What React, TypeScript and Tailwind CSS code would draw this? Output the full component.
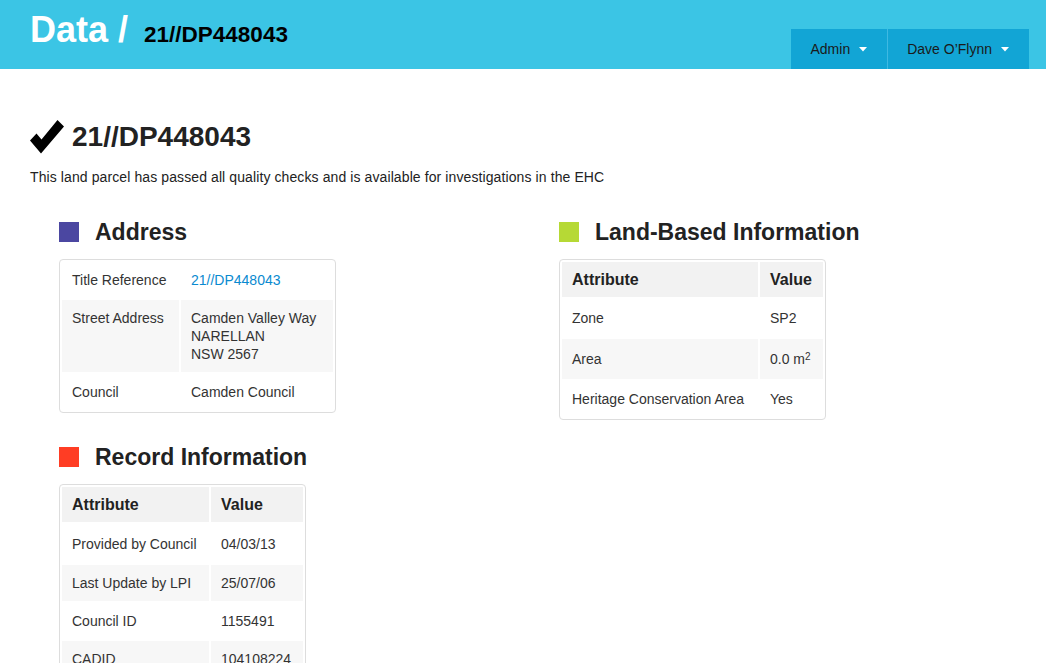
import React from "react";

const font = { fontFamily: '"Liberation Sans", Arial, Helvetica, sans-serif' };

function Caret() {
  return (
    <svg width="8" height="5" viewBox="0 0 8 5" className="ml-[9px] mt-[1px]">
      <polygon points="0,0 8,0 4,4.5" fill="#ffffff" />
    </svg>
  );
}

function Check() {
  return (
    <svg width="34" height="36" viewBox="0 0 34 36" className="shrink-0">
      <polygon
        points="0,21.5 6.5,14.5 11.5,20.5 27.5,1 34,7.5 11,34.5"
        fill="#000000"
      />
    </svg>
  );
}

function SectionHeading({ color, title }: { color: string; title: string }) {
  return (
    <div className="flex items-center h-[30px] mb-[12px]">
      <div className={`w-[20px] h-[20px] ${color}`} />
      <h2 className="ml-[16px] text-[23px] font-bold text-[#222222] leading-[30px]">
        {title}
      </h2>
    </div>
  );
}

type Row = { k: string; v: React.ReactNode; cls?: string };

function DataTable({
  header,
  rows,
  w1,
  w2,
}: {
  header?: boolean;
  rows: Row[];
  w1: string;
  w2: string;
}) {
  return (
    <table className="border-separate border-spacing-[2px] border border-[#dddddd] rounded-[4px] text-[14px] leading-[18px] text-[#333333] table-fixed">
      <colgroup>
        <col className={w1} />
        <col className={w2} />
      </colgroup>
      {header && (
        <thead>
          <tr>
            <th className="bg-[#f2f2f2] text-left px-[10px] h-[35px] text-[16px] font-bold text-[#222222]">
              Attribute
            </th>
            <th className="bg-[#f2f2f2] text-left px-[10px] h-[35px] text-[16px] font-bold text-[#222222]">
              Value
            </th>
          </tr>
        </thead>
      )}
      <tbody>
        {rows.map((r, i) => {
          const bg = i % 2 === 1 ? "bg-[#f7f7f7]" : "";
          const py = r.cls ?? "py-[9px]";
          return (
            <tr key={i}>
              <td className={`${bg} ${py} px-[10px] align-top whitespace-nowrap`}>{r.k}</td>
              <td className={`${bg} ${py} px-[10px] align-top whitespace-nowrap`}>{r.v}</td>
            </tr>
          );
        })}
      </tbody>
    </table>
  );
}

export default function App() {
  return (
    <div style={font} className="min-h-[663px] bg-white text-[#333333]">
      <header className="h-[69px] bg-[#3bc5e5] flex items-start justify-between">
        <div className="flex items-baseline pl-[30px] pt-[8px]">
          <span className="text-[36px] font-bold text-white leading-[44px]">Data /</span>
          <span className="ml-[16px] text-[22.5px] font-bold text-black">21//DP448043</span>
        </div>
        <nav className="flex mt-[29px] mr-[17px] h-[40px]">
          <button className="h-[40px] bg-[#12a5d5] pl-[20px] pr-[20px] flex items-center text-[14px] text-[#1a1a1a]">
            Admin
            <Caret />
          </button>
          <div className="w-[1px] bg-[#3fb9e2]" />
          <button className="h-[40px] bg-[#12a5d5] pl-[19px] pr-[20px] flex items-center text-[14px] text-[#1a1a1a]">
            Dave O’Flynn
            <Caret />
          </button>
        </nav>
      </header>

      <main className="px-[30px] pt-[50px]">
        <div className="flex items-center">
          <Check />
          <h1 className="ml-[8px] text-[28px] font-bold text-[#222222] leading-[36px]">21//DP448043</h1>
        </div>
        <p className="mt-[13px] text-[14px] tracking-[0.1px] leading-[18px] text-[#222222]">
          This land parcel has passed all quality checks and is available for investigations in the EHC
        </p>

        <div className="grid grid-cols-[500px_1fr] mt-[31px] pl-[29px]">
          <div className="flex flex-col">
            <section>
              <SectionHeading color="bg-[#4b47a1]" title="Address" />
              <DataTable
                w1="w-[117px]"
                w2="w-[152px]"
                rows={[
                  { k: "Title Reference", v: <a className="text-[#0a8ad0]">21//DP448043</a> },
                  {
                    k: "Street Address",
                    v: (
                      <span>
                        Camden Valley Way
                        <br />
                        NARELLAN
                        <br />
                        NSW 2567
                      </span>
                    ),
                  },
                  { k: "Council", v: "Camden Council" },
                ]}
              />
            </section>
            <section className="mt-[29px]">
              <SectionHeading color="bg-[#ff3d24]" title="Record Information" />
              <DataTable
                header
                w1="w-[147px]"
                w2="w-[92px]"
                rows={[
                  { k: "Provided by Council", v: "04/03/13", cls: "pt-[11px] pb-[10px]" },
                  { k: "Last Update by LPI", v: "25/07/06" },
                  { k: "Council ID", v: "1155491" },
                  { k: "CADID", v: "104108224" },
                ]}
              />
            </section>
          </div>
          <div>
            <section>
              <SectionHeading color="bg-[#b6d935]" title="Land-Based Information" />
              <DataTable
                header
                w1="w-[196px]"
                w2="w-[63px]"
                rows={[
                  { k: "Zone", v: "SP2", cls: "py-[10px]" },
                  {
                    k: "Area",
                    v: (
                      <span>
                        0.0 m<sup className="text-[10px] leading-none top-[-0.4em]">2</sup>
                      </span>
                    ),
                    cls: "py-[11px]",
                  },
                  { k: "Heritage Conservation Area", v: "Yes" },
                ]}
              />
            </section>
          </div>
        </div>
      </main>
    </div>
  );
}
